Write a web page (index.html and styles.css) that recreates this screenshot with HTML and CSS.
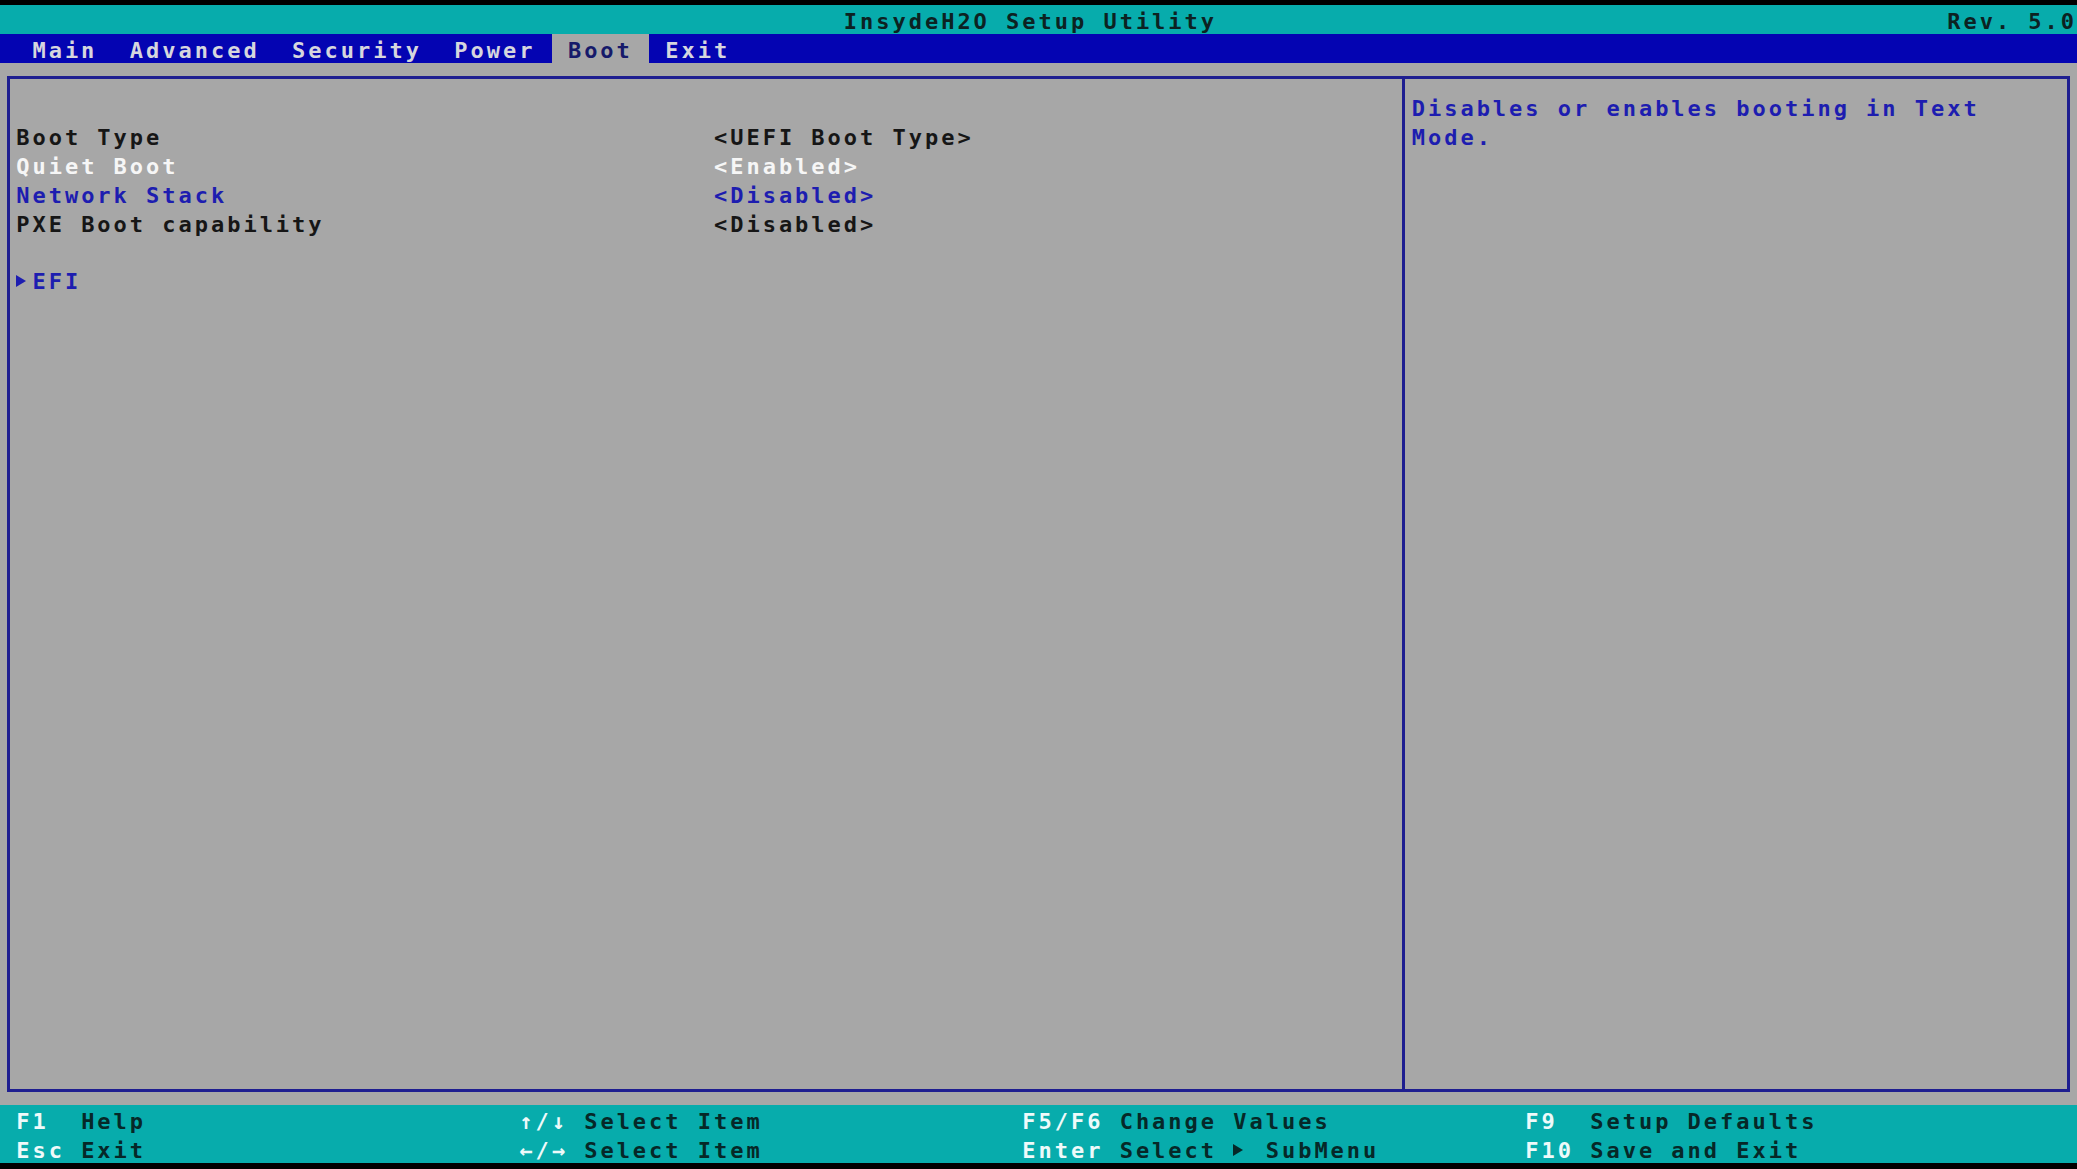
FILE: index.html
```html
<!DOCTYPE html>
<html lang="en">
<head>
    <meta charset="UTF-8">
    <meta name="viewport" content="width=device-width, initial-scale=1.0">
    <title>InsydeH2O Setup Utility</title>
    <link rel="stylesheet" href="styles.css">
</head>
<body>
    <div class="screen">
        <header class="titlebar">
            <span class="title">InsydeH2O Setup Utility</span>
            <span class="rev">Rev. 5.0</span>
        </header>

        <nav class="menubar">
            <span class="tab">Main</span>
            <span class="tab">Advanced</span>
            <span class="tab">Security</span>
            <span class="tab">Power</span>
            <span class="tab active">Boot</span>
            <span class="tab">Exit</span>
        </nav>

        <main class="workspace">
            <div class="frame">
                <section class="settings">
                    <div class="row"></div>
                    <div class="row">
                        <span class="label">Boot Type</span>
                        <span class="value">&lt;UEFI Boot Type&gt;</span>
                    </div>
                    <div class="row selected">
                        <span class="label">Quiet Boot</span>
                        <span class="value">&lt;Enabled&gt;</span>
                    </div>
                    <div class="row editable">
                        <span class="label">Network Stack</span>
                        <span class="value">&lt;Disabled&gt;</span>
                    </div>
                    <div class="row">
                        <span class="label">PXE Boot capability</span>
                        <span class="value">&lt;Disabled&gt;</span>
                    </div>
                    <div class="row"></div>
                    <div class="row editable">
                        <span class="label"><span class="tri"></span>EFI</span>
                    </div>
                </section>
                <aside class="help">
                    <p>Disables or enables booting in Text Mode.</p>
                </aside>
            </div>
        </main>

        <footer class="keys">
            <div class="key-group">
                <div class="key-line"><span class="key">F1  </span>Help</div>
                <div class="key-line"><span class="key">Esc </span>Exit</div>
            </div>
            <div class="key-group">
                <div class="key-line"><span class="key">↑/↓ </span>Select Item</div>
                <div class="key-line"><span class="key">←/→ </span>Select Item</div>
            </div>
            <div class="key-group">
                <div class="key-line"><span class="key">F5/F6 </span>Change Values</div>
                <div class="key-line"><span class="key">Enter </span>Select <span class="tri"></span> SubMenu</div>
            </div>
            <div class="key-group">
                <div class="key-line"><span class="key">F9  </span>Setup Defaults</div>
                <div class="key-line"><span class="key">F10 </span>Save and Exit</div>
            </div>
        </footer>
    </div>
</body>
</html>
```

FILE: styles.css
```css
:root {
    --cw: 16.227px;          /* one text cell, 128 columns */
    --rh: 28.95px;           /* one text row, 40 rows */
    --teal: #07acac;
    --bar-blue: #0404b2;
    --gray: #a7a7a7;
    --frame: #1e1e90;
    --ink: #161616;
    --ink-white: #f6f6f6;
    --ink-blue: #1d1db0;
    --menu-text: #d6d6de;
    --key-white: #eefafa;
    --key-dark: #062828;
}

body {
    margin: 0;
    background: #000;
    overflow: hidden;
}

.screen {
    margin-top: 5px;
    width: calc(var(--cw) * 128);
    height: calc(var(--rh) * 40);
    display: flex;
    flex-direction: column;
    font-family: "DejaVu Sans Mono", "Liberation Mono", monospace;
    font-size: 22px;
    font-weight: bold;
    letter-spacing: 2.982px;
    color: var(--ink);
}

/* every text row: text sits low in its cell, like the firmware font */
.titlebar,
.tab,
.row,
.key-line {
    box-sizing: border-box;
    height: var(--rh);
    padding-top: 6px;
    line-height: calc(var(--rh) - 6px);
}

.titlebar {
    display: flex;
    justify-content: space-between;
    padding-left: calc(var(--cw) * 52);
    background: var(--teal);
    color: #0c2222;
}

.menubar {
    display: flex;
    height: var(--rh);
    padding-left: var(--cw);
    background: var(--bar-blue);
}

.tab {
    padding-left: var(--cw);
    padding-right: var(--cw);
    color: var(--menu-text);
}

.tab.active {
    background: var(--gray);
    color: #161a6a;
}

.workspace {
    flex: 1;
    display: flex;
    padding: calc(var(--rh) / 2 - 1.5px) calc(var(--cw) / 2 - 1.5px);
    background: var(--gray);
}

.frame {
    flex: 1;
    display: grid;
    grid-template-columns: calc(var(--cw) * 86 - 3px) 1fr;
    border: 3px solid var(--frame);
}

.settings {
    padding-top: calc(var(--rh) / 2 - 1.5px);
    padding-left: calc(var(--cw) / 2 - 1.5px);
}

.row {
    display: grid;
    grid-template-columns: calc(var(--cw) * 43) auto;
    white-space: pre;
}

.row.selected {
    color: var(--ink-white);
}

.row.editable {
    color: var(--ink-blue);
}

.help {
    border-left: 3px solid var(--frame);
    padding-top: calc(var(--rh) / 2 - 1.5px);
    padding-left: calc(var(--cw) / 2 - 1.5px);
    color: var(--ink-blue);
}

.help p {
    margin: 0;
    padding-top: 3px;
    line-height: var(--rh);
    width: calc(var(--cw) * 40);
}

/* the firmware's ▶ glyph */
.tri {
    display: inline-block;
    width: var(--cw);
    letter-spacing: 0;
    vertical-align: 2px;
}

.tri::before {
    content: "";
    display: block;
    width: 0;
    height: 0;
    border-left: 10px solid currentColor;
    border-top: 6px solid transparent;
    border-bottom: 6px solid transparent;
}

.keys {
    display: grid;
    grid-template-columns: repeat(3, calc(var(--cw) * 31)) 1fr;
    padding-left: var(--cw);
    background: var(--teal);
    color: var(--key-dark);
}

.key-line {
    white-space: pre;
}

.key {
    color: var(--key-white);
}
```
